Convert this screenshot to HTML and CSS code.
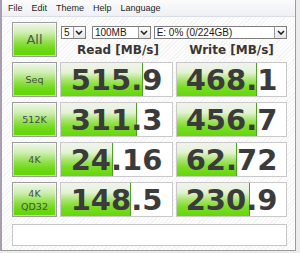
FILE: index.html
```html
<!DOCTYPE html>
<html lang="en">
<head>
    <meta charset="UTF-8">
    <title>CrystalDiskMark</title>
    <link rel="stylesheet" href="styles.css">
</head>
<body>
    <div class="window">
        <div class="menubar">
            <span>File</span>
            <span>Edit</span>
            <span>Theme</span>
            <span>Help</span>
            <span>Language</span>
        </div>
        <div class="main">
            <div class="grid">
                <div class="label all">All</div>
                <div class="top">
                    <div class="selects">
                        <div class="select count"><span>5</span><i class="arrow"><svg viewBox="0 0 8 5" width="8" height="5"><path d="M1 1 L4 4 L7 1" fill="none" stroke="#222" stroke-width="1.6"/></svg></i></div>
                        <div class="select size"><span>100MB</span><i class="arrow"><svg viewBox="0 0 8 5" width="8" height="5"><path d="M1 1 L4 4 L7 1" fill="none" stroke="#222" stroke-width="1.6"/></svg></i></div>
                        <div class="select drive"><span>E: 0% (0/224GB)</span><i class="arrow"><svg viewBox="0 0 8 5" width="8" height="5"><path d="M1 1 L4 4 L7 1" fill="none" stroke="#222" stroke-width="1.6"/></svg></i></div>
                    </div>
                    <div class="heads">
                        <div class="head read">Read [MB/s]</div>
                        <div class="head write">Write [MB/s]</div>
                    </div>
                </div>

                <div class="label">Seq</div>
                <div class="cell" style="--w: 82px">515.9</div>
                <div class="cell" style="--w: 80px">468.1</div>

                <div class="label">512K</div>
                <div class="cell" style="--w: 76px">311.3</div>
                <div class="cell" style="--w: 80px">456.7</div>

                <div class="label">4K</div>
                <div class="cell" style="--w: 52px">24.16</div>
                <div class="cell" style="--w: 60px">62.72</div>

                <div class="label">4K<br>QD32</div>
                <div class="cell" style="--w: 70px">148.5</div>
                <div class="cell" style="--w: 73px">230.9</div>
            </div>
            <div class="comment"></div>
        </div>
    </div>
</body>
</html>
```

FILE: styles.css
```css
body {
    margin: 0;
    background-color: #ececec;
    font-family: "Liberation Sans", Arial, sans-serif;
}
.window {
    width: 293px;
    height: 250px;
    border-left: 2px solid #a89eb0;
    border-right: 1px solid #9c9c9c;
    border-bottom: 1px solid #9c9c9c;
    background-color: #fbfbfb;
    background-image: repeating-linear-gradient(135deg, #fdfdfd 0 2px, #f4f4f4 2px 3px);
}
.menubar {
    height: 16px;
    border-bottom: 1px solid #d9dde4;
    background: linear-gradient(#fbfbfc, #eef0f4);
    display: flex;
    align-items: center;
    gap: 9px;
    padding-left: 6px;
    font-size: 9px;
    color: #1e1e1e;
}
.main {
    padding: 5px 0 0 10px;
}
.grid {
    display: grid;
    grid-template-columns: 45px 113px 111px;
    grid-template-rows: repeat(5, 35px);
    column-gap: 3px;
    row-gap: 5px;
}
.label {
    box-sizing: border-box;
    border: 1px solid #9d9d9d;
    background: linear-gradient(#f1f6ed 0%, #cdeeb0 30%, #8fe048 58%, #6bd912 80%, #62d606 100%);
    box-shadow: inset 0 0 0 1px rgba(255, 255, 255, 0.5);
    display: flex;
    align-items: center;
    justify-content: center;
    text-align: center;
    font-family: "DejaVu Sans", sans-serif;
    font-size: 9.5px;
    line-height: 13px;
    color: #4a4a4a;
}
.all {
    font-size: 13px;
    color: #555;
}
.top {
    grid-column: 2 / 4;
    display: flex;
    flex-direction: column;
}
.selects {
    display: flex;
    margin-top: 4px;
    margin-left: 1px;
    height: 13px;
}
.select {
    box-sizing: border-box;
    height: 13px;
    border: 1px solid #7f7f7f;
    background: #fff;
    display: flex;
    align-items: center;
    justify-content: space-between;
    font-size: 10px;
    color: #1a1a1a;
    padding-left: 2px;
}
.select span {
    line-height: 11px;
}
.count {
    width: 25px;
}
.size {
    width: 59px;
    margin-left: 6px;
}
.drive {
    width: 134px;
    margin-left: 3px;
}
.arrow {
    box-sizing: border-box;
    width: 12px;
    height: 11px;
    border-left: 1px solid #9a9a9a;
    background: linear-gradient(#fafafa, #e6e6e6);
    display: flex;
    align-items: center;
    justify-content: center;
}
.heads {
    display: flex;
    margin-top: 4px;
}
.head {
    font-family: "DejaVu Sans", sans-serif;
    font-weight: bold;
    font-size: 12px;
    color: #3a3632;
    text-align: center;
}
.read {
    width: 116px;
}
.write {
    width: 111px;
}
.cell {
    box-sizing: border-box;
    border: 1px solid #c9c9c9;
    background-color: #fff;
    background-image:
        linear-gradient(to left, #4f9e25 1px, transparent 1px),
        linear-gradient(#f2f3f1 0%, #e3f3d4 28%, #a8e46c 52%, #78dc22 74%, #66d70c 100%);
    background-size: var(--w) 100%;
    background-repeat: no-repeat;
    font-family: "DejaVu Sans", sans-serif;
    font-weight: bold;
    font-size: 29px;
    line-height: 35px;
    color: #3b3b3b;
    text-align: center;
}
.comment {
    box-sizing: border-box;
    width: 275px;
    height: 22px;
    margin-top: 7px;
    border: 1px solid #c6c6c6;
    background: #fff;
}
```
